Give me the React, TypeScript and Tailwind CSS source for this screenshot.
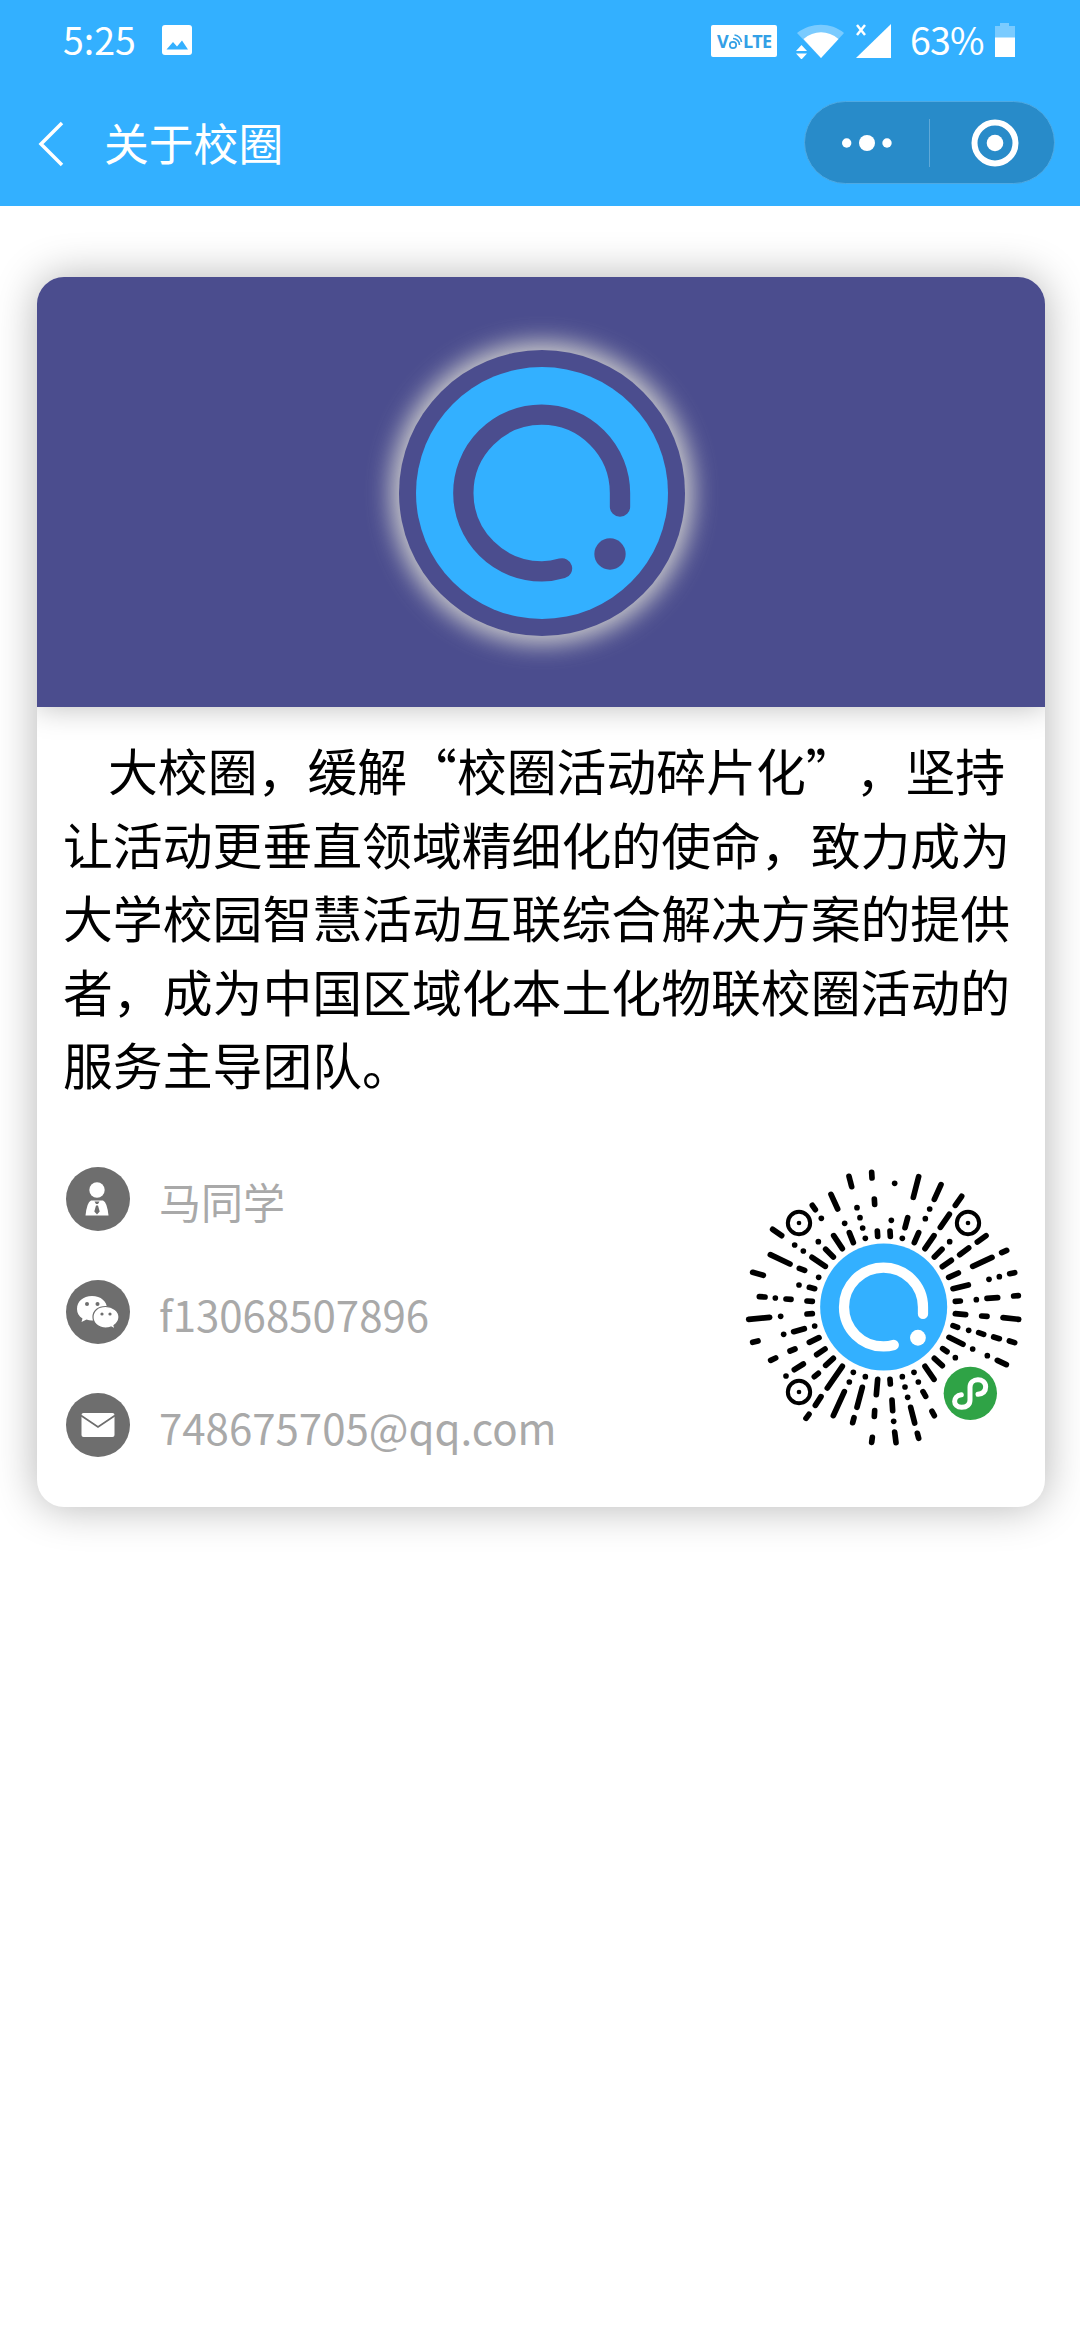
import type { ReactNode } from "react";

const introLines = [
  "大校圈，缓解“校圈活动碎片化”，坚持",
  "让活动更垂直领域精细化的使命，致力成为",
  "大学校园智慧活动互联综合解决方案的提供",
  "者，成为中国区域化本土化物联校圈活动的",
  "服务主导团队。",
];

// mini program code: [x1, y1, x2, y2] for strokes, [x, y] for dots
const codeMarks: number[][] = [
  // top left
  [342, 49, 350, 80], [410, 37, 411, 54], [418, 117, 419, 133], [288, 103, 308, 147], [232, 136, 241, 149],
  [259, 175], [366, 143], [375, 173], [383, 204], [391, 235], [427, 213, 428, 229], [329, 190],
  [343, 218, 355, 248], [296, 227, 322, 266], [250, 245], [272, 268, 295, 291], [231, 292, 271, 319],
  [113, 208, 140, 227], [179, 255], [205, 273], [106, 284, 165, 312], [193, 325, 209, 331], [251, 352],
  [53, 337, 85, 346], [192, 375], [223, 382, 239, 386], [73, 410, 90, 411], [121, 414], [153, 417, 168, 418],
  [216, 423, 232, 424],
  // top right
  [479, 70], [551, 50, 535, 112], [618, 74, 598, 118], [680, 109, 661, 136], [584, 147], [571, 176],
  [643, 163, 616, 202], [644, 245], [469, 181], [518, 173, 510, 203], [465, 213, 466, 229], [502, 235],
  [551, 218, 538, 248], [597, 227, 570, 266], [621, 268, 598, 291], [649, 301, 622, 320], [753, 227, 727, 246],
  [701, 264, 674, 284], [670, 339, 641, 352], [771, 292, 713, 319], [815, 271, 800, 278], [700, 375, 654, 386],
  [762, 358], [793, 350], [824, 341, 839, 338], [661, 424, 676, 423], [724, 419], [756, 415, 788, 413],
  [836, 408, 850, 407],
  // bottom left
  [216, 462, 232, 461], [41, 478, 104, 472], [137, 469], [53, 547, 69, 543], [146, 523], [176, 515, 208, 506],
  [239, 498], [223, 547, 252, 533], [165, 573, 180, 567], [107, 601, 122, 594], [245, 584, 270, 567],
  [178, 629, 205, 612], [153, 648], [272, 616, 295, 595], [238, 650, 250, 640], [322, 619, 277, 684],
  [258, 710, 241, 736], [222, 763, 213, 775], [343, 666], [355, 637], [391, 650], [328, 695, 295, 767],
  [382, 682, 366, 742], [357, 773, 353, 788], [428, 658, 424, 704], [419, 752, 418, 769], [412, 832, 410, 847],
  // bottom right
  [661, 461, 692, 464], [740, 468, 756, 469], [804, 473, 851, 478], [654, 497, 668, 502], [701, 511],
  [731, 518, 746, 523], [776, 531, 793, 536], [823, 543, 839, 548], [642, 532, 684, 553], [713, 567], [757, 587],
  [787, 601, 814, 614], [623, 566, 636, 575], [661, 593], [598, 595, 622, 617], [570, 619, 597, 658],
  [537, 637], [502, 650], [550, 666], [510, 681], [518, 712], [465, 658, 466, 672], [564, 695, 572, 709],
  [527, 742, 539, 789], [471, 720, 473, 752], [476, 784], [479, 816, 483, 848], [547, 820, 551, 835],
  [591, 754, 598, 767],
];

const finders = [[192, 189], [699, 189], [192, 696]];

function LogoMark({ color }: { color: string }) {
  return (
    <g>
      <circle r="378" fill="#33b0ff" />
      <path
        d="M234 41V0A235 235 0 1 0 0 235Q30 235 60 226"
        fill="none"
        stroke={color}
        strokeWidth="61"
        strokeLinecap="round"
      />
      <circle cx="204" cy="183" r="47" fill={color} />
    </g>
  );
}

function MiniProgramCode() {
  return (
    <svg viewBox="0 0 900 870" className="h-[290px] w-[300px]">
      <g stroke="#000" strokeWidth="17" strokeLinecap="round">
        {codeMarks.map(([x1, y1, x2 = x1, y2 = y1], i) => (
          <line key={i} x1={x1} y1={y1} x2={x2} y2={y2} />
        ))}
      </g>
      {finders.map(([x, y]) => (
        <g key={`${x}-${y}`}>
          <circle cx={x} cy={y} r="33.5" fill="#fff" stroke="#000" strokeWidth="12" />
          <circle cx={x} cy={y} r="7" />
        </g>
      ))}
      <g transform="translate(446 441) scale(.504)">
        <LogoMark color="#fff" />
      </g>
      <circle cx="706" cy="700" r="80" fill="#2fa346" />
      <path
        d="M679 704C652 707 652 742 680 742C696 742 705 734 705 720V682C705 652 752 652 752 680C752 695 743 701 729 703"
        fill="none"
        stroke="#fff"
        strokeWidth="15"
        strokeLinecap="round"
      />
    </svg>
  );
}

function StatusBar() {
  return (
    <div className="flex h-[82px] items-center pr-[65px] pl-[63px] text-white">
      <span className="mb-[5px] w-[74px] text-[37.5px] leading-none">5:25</span>
      <svg viewBox="0 0 30 30" className="mb-[2px] ml-[25px] h-[30px] w-[30px]">
        <rect width="30" height="30" rx="3" fill="#fff" />
        <path d="M4.5 24.5L11 17l4 4.5L20 15.5l6 9z" fill="#33b0ff" />
      </svg>
      <div className="ml-auto flex items-center">
        <svg viewBox="0 0 66 32" className="h-[32px] w-[66px]" fill="#33a0e6">
          <rect width="66" height="32" rx="2" fill="#fff" />
          <text x="6" y="23" fontSize="18" fontWeight="700" fontFamily="Open Sans">V</text>
          <text x="32" y="23" fontSize="18" fontWeight="700" fontFamily="Open Sans" textLength="29">LTE</text>
          <g fill="none" stroke="#33a0e6" strokeWidth="1.7">
            <circle cx="22" cy="20" r="3.2" />
            <path d="M22 13.5a6.5 6.5 0 0 1 6.5 6.5M23.500 10a8 8 0 0 1 7 7" />
          </g>
        </svg>
        <svg viewBox="0 0 50 36" className="mb-[1px] ml-[18px] h-[36px] w-[50px]">
          <path d="M2 10C16-1 36-1 49 10L26 35z" fill="#fff" opacity=".35" />
          <path d="M8.500 16C19 7 33 7 43.500 16L26 35z" fill="#fff" />
          <path d="M-1 26.500H13V31.500H-1z" fill="#33b0ff" />
          <path d="M1 28l5.500-6 5.500 6zM1 30.500h11l-5.500 6z" fill="#fff" />
        </svg>
        <svg viewBox="0 0 36 36" className="mb-[1px] ml-[10px] h-[36px] w-[36px]">
          <path d="M36 1V35H1z" fill="#fff" />
          <path d="M2 2l8 10M10 2L2 12" stroke="#fff" strokeWidth="2.500" />
        </svg>
        <span className="mb-[5px] ml-[19px] w-[71px] text-[37.5px] leading-none tracking-[-0.8px]">63%</span>
        <svg viewBox="0 0 20 34" className="mb-[2px] ml-[14px] h-[34px] w-[20px]" fill="#fff">
          <path d="M5 0h9v3h6v12H0V3h5z" opacity=".35" />
          <path d="M0 14.500h20V34H0z" />
        </svg>
      </div>
    </div>
  );
}

function NavBar() {
  return (
    <div className="flex h-[124px] items-center pr-[25px] pl-[37px]">
      <svg viewBox="0 0 28 46" className="h-[46px] w-[28px]" fill="none" stroke="#fff" strokeWidth="3.500">
        <path d="M25 2L4 23l21 21" />
      </svg>
      <h1 className="mb-[4px] ml-[39px] text-[44.8px] leading-none text-white">关于校圈</h1>
      <div className="mb-[3px] ml-auto flex h-[83px] w-[251px] items-center rounded-full border border-[#4fa9e2] bg-[#288bc9]">
        <svg viewBox="0 0 50 16" className="ml-[37px] h-[16px] w-[50px]" fill="#fff">
          <circle cx="4.700" cy="8" r="4.700" />
          <circle cx="25" cy="8" r="8" />
          <circle cx="45" cy="8" r="4.700" />
        </svg>
        <div className="ml-[37px] h-[48px] w-px bg-[#5fa9d8]" />
        <svg viewBox="0 0 48 48" className="ml-[41px] h-[48px] w-[48px]">
          <circle cx="24" cy="24" r="20.500" fill="none" stroke="#fff" strokeWidth="6" />
          <circle cx="24" cy="24" r="8.300" fill="#fff" />
        </svg>
      </div>
    </div>
  );
}

function PersonIcon() {
  return (
    <svg viewBox="0 0 64 64" className="h-full w-full">
      <circle cx="31" cy="23" r="7.700" fill="#fff" />
      <path d="M25 33.500H37Q41 35 42.500 48.500H19.500Q21 35 25 33.500z" fill="#fff" />
      <path d="M28.500 34.500h5l-1.500 2.500h-2zM30 38.500h2l1.700 6-2.700 3-2.700-3z" fill="#6e6e6e" />
    </svg>
  );
}

function WechatIcon() {
  return (
    <svg viewBox="0 0 64 64" className="h-full w-full">
      <path d="M26 16C17 16 11 21.500 11 29c0 4 2 7.500 5.500 9.500L15.500 42l5-2.500Q23 40.500 26 40.500c9 0 15-5 15-12S35 16 26 16z" fill="#fff" />
      <path d="M39.500 26.500C32 26.500 27 31 27 37s5 11 12.500 11q3.500 0 5.500-1l4 2-1-3.500c3-2 5-5 5-8.500 0-6-6-10.500-13.500-10.500z" fill="#fff" stroke="#6e6e6e" strokeWidth="1.200" />
      <g fill="#6e6e6e">
        <circle cx="21" cy="24" r="2" />
        <circle cx="31.500" cy="24" r="2" />
        <circle cx="36" cy="34" r="1.600" />
        <circle cx="44" cy="34" r="1.600" />
      </g>
    </svg>
  );
}

function MailIcon() {
  return (
    <svg viewBox="0 0 64 64" className="h-full w-full">
      <rect x="15.500" y="20" width="33" height="24" rx="2" fill="#fff" />
      <path d="M15 22.500L32 34l17-11.500" fill="none" stroke="#6e6e6e" strokeWidth="1.800" />
    </svg>
  );
}

function ContactRow({ icon, children }: { icon: ReactNode; children: ReactNode }) {
  return (
    <li className="flex h-[113px] items-center">
      <span className="h-[64px] w-[64px] rounded-full bg-[#6e6e6e]">{icon}</span>
      <span className="mt-[3px] ml-[29px] text-[42px] leading-none text-[#a9a9a9]">{children}</span>
    </li>
  );
}

export default function App() {
  return (
    <div lang="zh-CN" className="min-h-[2340px] w-[1080px] bg-white font-['Noto_Sans_CJK_SC',sans-serif]">
      <header className="h-[206px] bg-[#33b0ff]">
        <StatusBar />
        <NavBar />
      </header>

      <main className="pt-[71px] pl-[37px]">
        <section className="h-[1230px] w-[1008px] overflow-hidden rounded-[27px] bg-white shadow-[0_0_43px_#b4b4b4]">
          <div className="flex h-[430px] items-center justify-center bg-[#4b4d8e] pt-[2px] pl-[2px] shadow-[0_0_29px_#bbb]">
            <div className="flex h-[286px] w-[286px] items-center justify-center rounded-full bg-[#4b4d8e] shadow-[0_0_24px_8px_#ccc]">
              <svg viewBox="-378 -378 756 756" className="h-[252px] w-[252px]">
                <LogoMark color="#4b4d8e" />
              </svg>
            </div>
          </div>

          <p className="mt-[26px] pl-[26px] text-[49.85px] leading-[73.6px] whitespace-nowrap text-black [text-spacing-trim:space-all]">
            {introLines.map((line, i) => (
              <span key={line} className={i === 0 ? "block pl-[45px]" : "block"}>
                {line}
              </span>
            ))}
          </p>

          <div className="mt-[42px] flex">
            <ul className="w-[672px] pl-[29px]">
              <ContactRow icon={<PersonIcon />}>马同学</ContactRow>
              <ContactRow icon={<WechatIcon />}>f13068507896</ContactRow>
              <ContactRow icon={<MailIcon />}>748675705@qq.com</ContactRow>
            </ul>
            <div className="pt-[17px] pl-[26px]">
              <MiniProgramCode />
            </div>
          </div>
        </section>
      </main>
    </div>
  );
}
